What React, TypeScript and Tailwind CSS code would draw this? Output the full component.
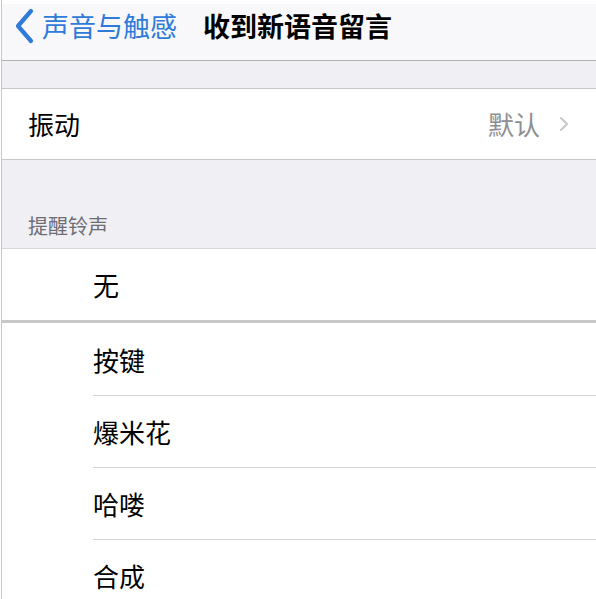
import { ChevronRight } from "lucide-react"

const tones = ["按键", "爆米花", "哈喽", "合成"]

const font = { fontFamily: '"Noto Sans CJK SC", "Noto Sans", sans-serif' }

function BackChevron() {
  return (
    <svg width="24" height="36" viewBox="0 0 24 36" fill="none">
      <path d="M19 3 L6 18 L19 33" stroke="#2f7bd9" strokeWidth="4.2" strokeLinecap="round" strokeLinejoin="round" />
    </svg>
  )
}

export default function App() {
  return (
    <div style={font} className="min-h-[599px] w-[596px] overflow-hidden bg-white">
      <div className="ml-px min-h-[599px] border-l border-[#c6c6c8]">
        {/* nav bar */}
        <div className="h-1 bg-white" />
        <div className="h-[57px] border-b border-[#b2b2b4] bg-[#f8f8fa]">
          <div className="flex h-[43px] items-center">
            <div className="ml-[10px] flex items-center">
              <BackChevron />
              <span className="ml-[6px] text-[27px] leading-none text-[#2f7bd9]">声音与触感</span>
            </div>
            <span className="ml-[26px] text-[27px] font-bold leading-none text-black">收到新语音留言</span>
          </div>
        </div>

        <div className="h-[28px] border-b border-[#c6c6c8] bg-[#efeff4]" />

        {/* vibration */}
        <div className="flex h-[71px] items-center justify-between border-b border-[#c8c8cc] bg-white pl-[26px] pr-[20px]">
          <span className="text-[26px] leading-none text-black">振动</span>
          <div className="flex items-center">
            <span className="text-[26px] leading-none text-[#8e8e93]">默认</span>
            <ChevronRight className="ml-[12px] h-[24px] w-[24px] text-[#c7c7cc]" strokeWidth={2} />
          </div>
        </div>

        {/* alert tones header */}
        <div className="flex h-[89px] items-end border-b border-[#d8d8dc] bg-[#efeff4] pb-[12px] pl-[26px]">
          <span className="text-[20px] leading-none text-[#6d6d72]">提醒铃声</span>
        </div>

        <div className="flex h-[71px] items-center bg-white pl-[91px]">
          <span className="text-[26px] leading-none text-black">无</span>
        </div>
        <div className="h-[3px] bg-[#c8c8c8]" />

        <div className="bg-white pl-[91px] pt-px">
          {tones.map((t, i) => (
            <div
              key={t}
              className={
                "flex h-[72px] items-center " + (i < tones.length - 1 ? "border-b border-[#d4d4d8]" : "")
              }
            >
              <span className="text-[26px] leading-none text-black">{t}</span>
            </div>
          ))}
        </div>
      </div>
    </div>
  )
}
